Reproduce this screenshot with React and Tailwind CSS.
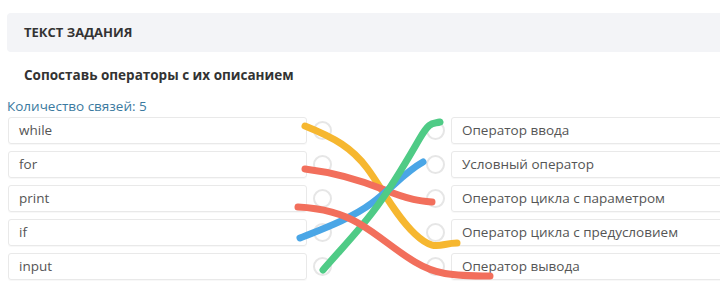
import React from 'react';

const leftItems = ['while', 'for', 'print', 'if', 'input'];
const rightItems = [
    'Оператор ввода',
    'Условный оператор',
    'Оператор цикла с параметром',
    'Оператор цикла с предусловием',
    'Оператор вывода',
];

const lines = [
    { color: '#f6b730', d: 'M305 126 C 335 138, 352 148, 367 168 S 395 215, 415 234 S 440 243, 457 243' },
    { color: '#f26f5c', d: 'M305 169 C 330 172, 360 180, 385 190 S 420 201, 432 202' },
    { color: '#4aa6e6', d: 'M300 238 C 325 228, 352 218, 372 203 S 405 172, 423 162' },
    { color: '#4fcb86', d: 'M323 270 C 340 250, 360 230, 378 205 S 410 155, 420 138 S 432 124, 440 122' },
    { color: '#f26f5c', d: 'M298 207 C 320 208, 340 212, 360 224 S 395 250, 415 262 S 450 276, 490 276' },
];

const Circle = () => (
    <div className="w-[19px] h-[19px] rounded-full border-2 border-[#e6e6e6] bg-white shrink-0"></div>
);

export default function App() {
    return (
        <div className="relative w-[720px] h-[307px] overflow-hidden bg-white" style={{ fontFamily: '"Open Sans", sans-serif' }}>
            <div className="pt-[13px]">
                <div className="ml-[7px] h-[39px] bg-[#f3f4f7] rounded-l-[4px] flex items-center pl-[17px]">
                    <span className="text-[13px] font-bold text-[#333]">ТЕКСТ ЗАДАНИЯ</span>
                </div>
                <div className="mt-[14px] pl-[24px] text-[13.5px] leading-[18px] font-bold text-[#333]">
                    Сопоставь операторы с их описанием
                </div>
                <div className="mt-[14px] pl-[7px] text-[13.5px] leading-[16px] text-[#3b7aa0]">
                    Количество связей: 5
                </div>
                <div className="mt-[3px] flex flex-col gap-[7px]">
                    {leftItems.map((item, i) => (
                        <div key={item} className="flex items-center h-[27px]">
                            <div className="shrink-0 ml-[8px] w-[299px] h-full border border-[#e9e9e9] rounded-[3px] flex items-center pl-[10px] text-[13.5px] text-[#555] shadow-[0_1px_1px_rgba(0,0,0,0.03)]">
                                {item}
                            </div>
                            <div className="shrink-0 ml-[6px]"><Circle /></div>
                            <div className="shrink-0 ml-[94px]"><Circle /></div>
                            <div className="shrink-0 ml-[6px] w-[300px] h-full border border-[#e9e9e9] rounded-[3px] flex items-center pl-[10px] text-[13.5px] text-[#555] shadow-[0_1px_1px_rgba(0,0,0,0.03)]">
                                {rightItems[i]}
                            </div>
                        </div>
                    ))}
                </div>
            </div>
            <svg className="absolute inset-0 pointer-events-none" width="720" height="307" viewBox="0 0 720 307">
                {lines.map((l, i) => (
                    <path key={i} d={l.d} fill="none" stroke={l.color} strokeWidth="7" strokeLinecap="round" />
                ))}
            </svg>
        </div>
    );
}
